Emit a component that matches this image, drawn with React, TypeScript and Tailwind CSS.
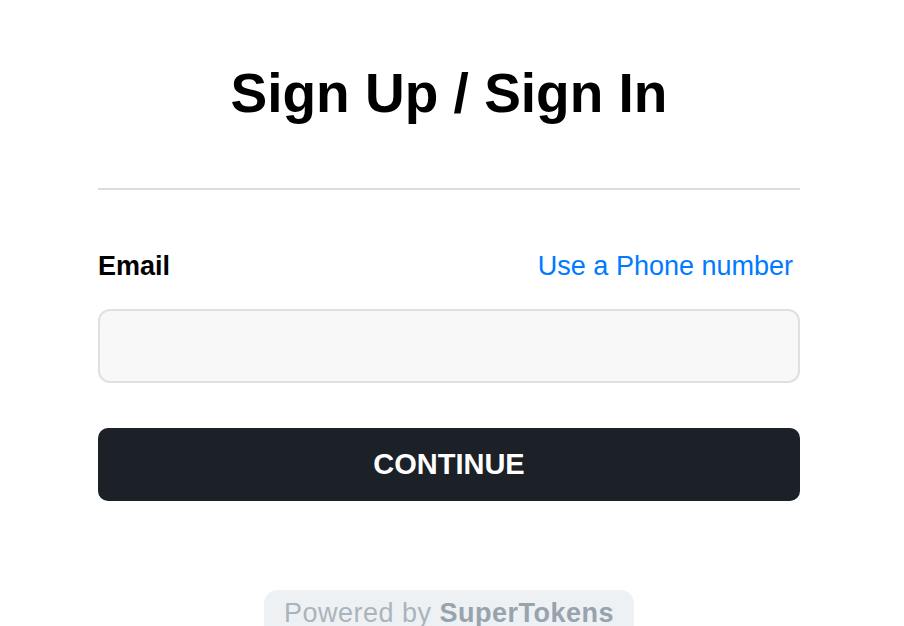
export default function App() {
  return (
    <div className="min-h-screen bg-white" style={{ fontFamily: '"Liberation Sans", Arial, sans-serif' }}>
      <div className="ml-[98px] w-[702px] pt-[66px]">
        <h1 className="text-center text-[55px] font-bold leading-none text-black">Sign Up / Sign In</h1>
        <div className="mt-[67px] h-[2px] bg-[#dddddd]" />

        <div className="mt-[63px] flex items-center justify-between pr-[7px]">
          <label className="text-[27px] font-bold leading-none text-black">Email</label>
          <a href="#" className="text-[27px] leading-none text-[#007aff]">Use a Phone number</a>
        </div>

        <input
          type="email"
          className="mt-[29px] block h-[74px] w-full rounded-[12px] border-2 border-[#e0e0e0] bg-[#f8f8f8] px-4 text-[27px] outline-none"
        />

        <button className="mt-[45px] flex h-[73px] w-full items-center justify-center rounded-[10px] bg-[#1c2027] text-[29px] font-bold text-white">
          CONTINUE
        </button>

        <div className="mt-[89px] flex justify-center">
          <div className="h-[60px] rounded-[14px] bg-[#eef1f3] px-[20px] pt-[10px] text-[27px] leading-none tracking-[0.5px] whitespace-nowrap">
            <span className="text-[#aab4bc]">Powered by </span>
            <span className="font-bold text-[#97a3ad]">SuperTokens</span>
          </div>
        </div>
      </div>
    </div>
  );
}
